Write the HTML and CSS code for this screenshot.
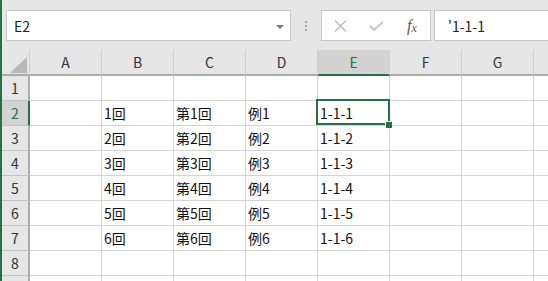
FILE: index.html
```html
<!DOCTYPE html>
<html lang="ja">
<head>
<meta charset="utf-8">
<title>Excel</title>
<link rel="stylesheet" href="styles.css">
</head>
<body>
<div class="app">
  <div class="topbar">
    <div class="namebox"><span>E2</span><span class="arrow"></span></div>
    <div class="grip"><i></i><i></i><i></i></div>
    <div class="fxbox">
      <span class="slot"><svg width="13" height="12" viewBox="0 0 13 12"><path d="M1 0.5L12 11.5M12 0.5L1 11.5" stroke="#b9b9b9" stroke-width="1.3" fill="none"/></svg></span>
      <span class="slot"><svg width="15" height="10" viewBox="0 0 15 10"><path d="M1 5L5 8.8L14 1" stroke="#c8c8c8" stroke-width="2.2" fill="none"/></svg></span>
      <span class="slot fx"><span class="f">f</span><span class="x">x</span></span>
    </div>
    <div class="formula">'1-1-1</div>
  </div>
  <div class="sheet">
    <div class="corner"><svg width="17" height="16" viewBox="0 0 17 16"><path d="M17 0V16H0Z" fill="#b8b8b8"/></svg></div>
    <div class="ch">A</div><div class="ch">B</div><div class="ch">C</div><div class="ch">D</div><div class="ch sel">E</div><div class="ch">F</div><div class="ch">G</div><div class="ch"></div>

    <div class="rh">1</div><div class="c"></div><div class="c"></div><div class="c"></div><div class="c"></div><div class="c"></div><div class="c"></div><div class="c"></div><div class="c"></div>
    <div class="rh sel">2</div><div class="c"></div><div class="c">1回</div><div class="c">第1回</div><div class="c">例1</div><div class="c active">1-1-1</div><div class="c"></div><div class="c"></div><div class="c"></div>
    <div class="rh">3</div><div class="c"></div><div class="c">2回</div><div class="c">第2回</div><div class="c">例2</div><div class="c">1-1-2</div><div class="c"></div><div class="c"></div><div class="c"></div>
    <div class="rh">4</div><div class="c"></div><div class="c">3回</div><div class="c">第3回</div><div class="c">例3</div><div class="c">1-1-3</div><div class="c"></div><div class="c"></div><div class="c"></div>
    <div class="rh">5</div><div class="c"></div><div class="c">4回</div><div class="c">第4回</div><div class="c">例4</div><div class="c">1-1-4</div><div class="c"></div><div class="c"></div><div class="c"></div>
    <div class="rh">6</div><div class="c"></div><div class="c">5回</div><div class="c">第5回</div><div class="c">例5</div><div class="c">1-1-5</div><div class="c"></div><div class="c"></div><div class="c"></div>
    <div class="rh">7</div><div class="c"></div><div class="c">6回</div><div class="c">第6回</div><div class="c">例6</div><div class="c">1-1-6</div><div class="c"></div><div class="c"></div><div class="c"></div>
    <div class="rh">8</div><div class="c"></div><div class="c"></div><div class="c"></div><div class="c"></div><div class="c"></div><div class="c"></div><div class="c"></div><div class="c"></div>
    <div class="rh"></div><div class="c"></div><div class="c"></div><div class="c"></div><div class="c"></div><div class="c"></div><div class="c"></div><div class="c"></div><div class="c"></div>
  </div>
</div>
</body>
</html>
```
FILE: styles.css
```css
* { box-sizing: border-box; }
html, body { margin: 0; padding: 0; }
body {
  width: 548px;
  height: 281px;
  overflow: hidden;
  font-family: "Noto Sans CJK JP", "Noto Sans", sans-serif;
  font-size: 14px;
  color: #111;
  background: #fff;
}
.app {
  width: 548px;
  height: 281px;
  overflow: hidden;
  border-left: 2px solid #217346;
  background: #fff;
}
.topbar {
  height: 50px;
  background: #e6e6e6;
  display: flex;
  align-items: flex-start;
  padding: 10px 0 0 4px;
}
.namebox {
  width: 285px;
  height: 31px;
  background: #fff;
  border: 1px solid #c6c6c6;
  display: flex;
  align-items: center;
  justify-content: space-between;
  padding: 0 6px 0 7px;
  color: #222;
  line-height: 1;
}
.arrow {
  width: 0;
  height: 0;
  border-left: 4px solid transparent;
  border-right: 4px solid transparent;
  border-top: 4px solid #777;
  margin-top: 2px;
}
.grip {
  width: 30px;
  height: 31px;
  display: flex;
  flex-direction: column;
  align-items: center;
  justify-content: center;
  gap: 2px;
}
.grip i {
  display: block;
  width: 2px;
  height: 2px;
  background: #a8a8a8;
}
.fxbox {
  width: 110px;
  height: 31px;
  background: #fff;
  border: 1px solid #c6c6c6;
  display: flex;
  align-items: center;
  margin-right: 3px;
}
.slot {
  flex: 1;
  display: flex;
  justify-content: center;
  align-items: center;
}
.fx {
  font-family: "Liberation Serif", "DejaVu Serif", serif;
  font-style: italic;
  color: #555;
  line-height: 1;
}
.fx .f { font-size: 16px; }
.fx .x { font-size: 12px; position: relative; top: 2px; }
.formula {
  flex: 1;
  height: 31px;
  margin-right: -2px;
  background: #fff;
  border: 1px solid #c6c6c6;
  display: flex;
  align-items: center;
  padding-left: 13px;
  color: #222;
}
.sheet {
  display: grid;
  grid-template-columns: 28px repeat(8, 72px);
  grid-template-rows: 26px repeat(9, 25px);
  width: 604px;
}
.corner {
  background: #e6e6e6;
  border-bottom: 2px solid #ababab;
  border-right: 1px solid #cfcfcf;
  display: flex;
  align-items: flex-end;
  justify-content: flex-end;
  padding: 0 2px 1px 0;
}
.ch {
  background: #e6e6e6;
  border-bottom: 2px solid #ababab;
  border-right: 1px solid #cfcfcf;
  display: flex;
  align-items: center;
  justify-content: center;
  color: #333;
}
.ch.sel {
  background: #d2d2d2;
  border-bottom-color: #217346;
  color: #217346;
}
.rh {
  background: #e6e6e6;
  border-right: 2px solid #ababab;
  border-bottom: 1px solid #c4c4c4;
  display: flex;
  align-items: center;
  justify-content: center;
  color: #333;
}
.rh.sel {
  background: #d2d2d2;
  border-right-color: #217346;
  color: #217346;
}
.c {
  border-right: 1px solid #d4d4d4;
  border-bottom: 1px solid #d4d4d4;
  display: flex;
  align-items: center;
  padding-left: 2px;
  white-space: nowrap;
}
.c.active {
  position: relative;
  z-index: 2;
}
.c.active::before {
  content: "";
  position: absolute;
  top: -2px;
  left: -2px;
  right: -1px;
  bottom: 0;
  border: 2px solid #217346;
}
.c.active::after {
  content: "";
  position: absolute;
  right: -3px;
  bottom: -3px;
  width: 6px;
  height: 6px;
  background: #217346;
  box-shadow: 0 0 0 1px #fff;
}
```
